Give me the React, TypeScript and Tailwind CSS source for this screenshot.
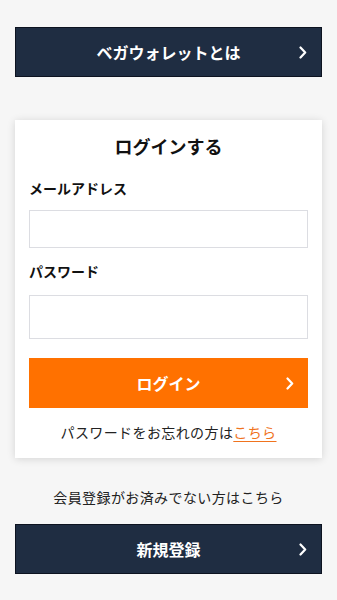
import React from "react";

const Chevron = ({ className = "" }: { className?: string }) => (
  <svg className={className} width="8" height="13" viewBox="0 0 8 13" fill="none">
    <path d="M1.5 1.5 L6.2 6.5 L1.5 11.5" stroke="white" strokeWidth="2.2" strokeLinecap="round" strokeLinejoin="round" />
  </svg>
);

export default function App() {
  return (
    <div
      className="min-h-[600px] w-full bg-[#f6f6f6] px-[15px] pt-[27px] pb-[26px]"
      style={{ fontFamily: '"Noto Sans CJK JP", "Noto Sans", sans-serif' }}
    >
      <button className="relative flex h-[50px] w-full items-center justify-center border border-[#0d1320] bg-[#1f2d42] text-[16px] font-bold text-white">
        ベガウォレットとは
        <Chevron className="absolute right-[14px] top-[18px]" />
      </button>

      <div className="mt-[43px] bg-white px-[14px] pt-[12px] pb-[15px] shadow-[0_1px_8px_rgba(0,0,0,0.14)]">
        <h2 className="text-center text-[18px] font-bold leading-[28px] text-[#111]">ログインする</h2>
        <div className="mt-[18px] text-[14px] font-bold leading-[21px] text-[#111]">メールアドレス</div>
        <input className="mt-[11px] block h-[38px] w-full border border-[#dcdde2] bg-white outline-none" />
        <div className="mt-[13px] text-[14px] font-bold leading-[21px] text-[#111]">パスワード</div>
        <input type="password" className="mt-[13px] block h-[44px] w-full border border-[#dcdde2] bg-white outline-none" />
        <button className="relative mt-[19px] flex h-[50px] w-full items-center justify-center bg-[#ff7100] text-[16px] font-bold text-white">
          ログイン
          <Chevron className="absolute right-[14px] top-[19px]" />
        </button>
        <p className="mt-[14px] text-center text-[14px] leading-[21px] tracking-[0.4px] text-[#222]">
          パスワードをお忘れの方は
          <a className="text-[#f0731e] underline underline-offset-[3px]">こちら</a>
        </p>
      </div>

      <p className="mt-[29px] text-center text-[14px] leading-[21px] tracking-[0.4px] text-[#222]">会員登録がお済みでない方はこちら</p>
      <button className="relative mt-[16px] flex h-[50px] w-full items-center justify-center border border-[#0d1320] bg-[#1f2d42] text-[16px] font-bold text-white">
        新規登録
        <Chevron className="absolute right-[14px] top-[18px]" />
      </button>
    </div>
  );
}
